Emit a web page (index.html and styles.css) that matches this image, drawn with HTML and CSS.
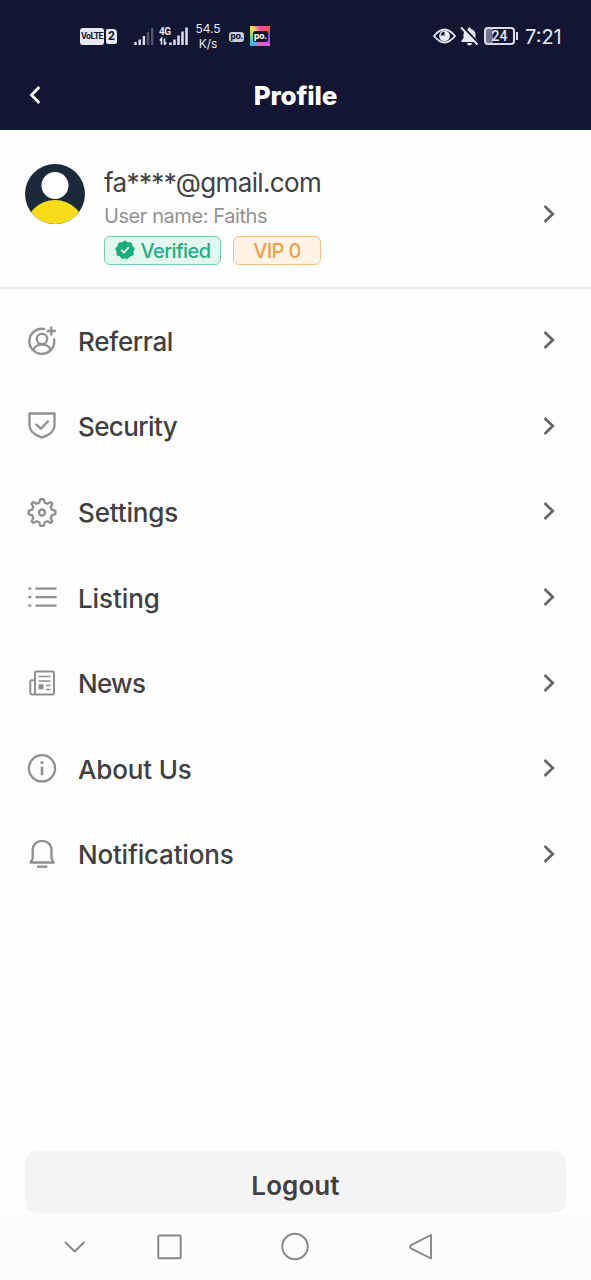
FILE: index.html
```html
<!DOCTYPE html>
<html lang="en">
<head>
<meta charset="utf-8">
<title>Profile</title>
<link rel="stylesheet" href="styles.css">
</head>
<body>
<header class="top">
  <div class="status">
    <span class="volte">VoLTE</span><span class="sim">2</span>
    <svg class="signal" width="20" height="18" viewBox="0 0 20 18"><g stroke="#dfe1ee" stroke-width="2.4"><path d="M1.5 15v3M5.700 12.500V18M9.900 9V18"/><path d="M14 5V18M18.200 1V18" opacity=".3"/></g></svg>
    <span class="network"><span class="gen">4G</span><svg width="29" height="18" viewBox="0 0 29 18"><g stroke="#dfe1ee" stroke-width="2.500"><path d="M11.500 15.500V18M15.500 12.500V18M19.500 8.500V18M23.500 4.500V18M27.500 .5V18"/><path d="M2.500 17.500V11.500L.8 13.500M5.500 11.500V17.500L7.400 15.500" fill="none" stroke-width="1.600"/></g></svg></span>
    <span class="speed">54.5<br>K/s</span>
    <span class="chip">po.</span>
    <span class="app"><span class="app-name">po.</span></span>
    <span class="status-right">
      <svg width="23" height="16" viewBox="0 0 23 16"><path d="M1 8Q11.500-5 22 8Q11.500 21 1 8Z" fill="none" stroke="#e6e8f2" stroke-width="1.800"/><circle cx="11.500" cy="8" r="5.400" fill="#e6e8f2"/><path d="M11.500 7.500V3.700A4 4 0 0 0 7.700 7.500Z" fill="#121632"/></svg>
      <svg class="mute" width="19" height="20" viewBox="0 0 19 20"><path d="M1.500 16V14.500L3.500 12V8Q4 4 8 3.200Q8 1.200 9.500 1.200T11 3.200Q15 4 15.500 8V12L17.500 14.500V16ZM7 17h5q-.3 2.500-2.500 2.500T7 17Z" fill="#e6e8f2"/><path d="M3 1L19.500 18" stroke="#121632" stroke-width="2.200"/><path d="M1 1.500L17.500 18.500" stroke="#e6e8f2" stroke-width="1.800"/></svg>
      <span class="battery">24</span><span class="battery-tip"></span>
      <span class="time">7:21</span>
    </span>
  </div>
  <div class="titlebar">
    <svg class="back" width="14" height="20" viewBox="0 0 14 20"><path d="M11.300 2L3.500 10L11.300 18" fill="none" stroke="#fff" stroke-width="2.800"/></svg>
    <h1 class="title">Profile</h1>
  </div>
</header>
<section class="account">
  <svg class="avatar" width="60" height="60" viewBox="0 0 60 60"><defs><clipPath id="disc"><circle cx="30" cy="30" r="30"/></clipPath></defs><g clip-path="url(#disc)"><path fill="#1c293a" d="M0 0h60v60H0z"/><circle cx="30" cy="66" r="30" fill="#f9dc19"/><circle cx="30" cy="21.500" r="13.500" fill="#fff"/></g></svg>
  <div class="info">
    <div class="mail">fa****@gmail.com</div>
    <div class="user">User name: Faiths</div>
    <div class="badges">
      <span class="badge verified"><svg width="20" height="20" viewBox="0 0 20 20"><path d="M10 .8L12.700 2.800L16 2.900L17 6L19.300 8.600L18 11.500L18 15L14.900 16L12.500 18.700L10 17.700L7.500 18.700L5.100 16L2 15L2 11.500L.7 8.600L3 6L4 2.900L7.300 2.800Z" fill="#17ad78" stroke="#17ad78" stroke-linejoin="round"/><path d="M6.200 9.800L9 12.500L13.900 7.200" fill="none" stroke="#fff" stroke-width="1.700"/></svg><span class="verified-text">Verified</span></span>
      <span class="badge vip">VIP 0</span>
    </div>
  </div>
  <svg class="arrow" width="14" height="20" viewBox="0 0 14 20"><path d="M2.500 2L10.800 10L2.500 18"/></svg>
</section>
<nav class="menu">
  <a class="row"><svg class="icon" viewBox="0 0 32 32"><path d="M19 4.200A12.500 12.500 0 1 0 28 13.500"/><circle cx="16" cy="14" r="5.200"/><path d="M7.500 25.300C8.500 17.800 23.500 17.800 24.500 25.300M25.300 1.500V10.500M20.800 6H29.800"/></svg><span class="label referral">Referral</span><svg class="arrow" width="14" height="20" viewBox="0 0 14 20"><path d="M2.500 2L10.800 10L2.500 18"/></svg></a>
  <a class="row"><svg class="icon" viewBox="0 0 32 32"><path d="M3.500 3.500H28.500V15.500C28.500 21.500 22 25.500 16 27.700C10 25.500 3.500 21.500 3.500 15.500Z"/><path d="M9.700 14L14.800 18.700L22.600 10.700"/></svg><span class="label security">Security</span><svg class="arrow" width="14" height="20" viewBox="0 0 14 20"><path d="M2.500 2L10.800 10L2.500 18"/></svg></a>
  <a class="row"><svg class="icon" viewBox="0 0 32 31"><path d="M14.400 2.600H17.600L18.800 6.200L21.500 7.300L24.800 5.600L26.400 7.200L24.700 10.500L25.800 13.200L29.400 14.400V17.600L25.800 18.800L24.700 21.500L26.400 24.800L24.800 26.400L21.500 24.700L18.800 25.800L17.600 29.400H14.400L13.200 25.800L10.500 24.700L7.200 26.400L5.600 24.800L7.300 21.500L6.200 18.800L2.600 17.600V14.400L6.200 13.200L7.300 10.500L5.600 7.200L7.200 5.600L10.500 7.300L13.200 6.200Z"/><circle cx="16" cy="16" r="3"/></svg><span class="label settings">Settings</span><svg class="arrow" width="14" height="20" viewBox="0 0 14 20"><path d="M2.500 2L10.800 10L2.500 18"/></svg></a>
  <a class="row"><svg class="icon" viewBox="0 0 32 32"><path d="M9.500 6.700H30.500M9.500 15.200H30.500M9.500 23.700H30.500M2.300 6.700H5.300M2.300 15.200H5.300M2.300 23.700H5.300"/></svg><span class="label listing">Listing</span><svg class="arrow" width="14" height="20" viewBox="0 0 14 20"><path d="M2.500 2L10.800 10L2.500 18"/></svg></a>
  <a class="row"><svg class="icon" viewBox="0 0 32 32"><path d="M9 27.500V6Q9 4.500 10.500 4.500H26.500Q28 4.500 28 6V25.700Q28 27.500 26.200 27.500H6.500Q4.300 27.500 4.300 25.300V14.500Q4.300 13.300 5.500 13.300H9" stroke-width="2"/><path d="M12.500 9.500H24.500M12.500 14H24.500M20 18.500H24.500M20 22.500H24.500" stroke-width="1.500"/><path d="M12.500 17.300h5v5h-5z" fill="#8b8b8b" stroke="none"/></svg><span class="label news">News</span><svg class="arrow" width="14" height="20" viewBox="0 0 14 20"><path d="M2.500 2L10.800 10L2.500 18"/></svg></a>
  <a class="row"><svg class="icon" viewBox="0 0 32 32"><circle cx="16" cy="15.300" r="13.100"/><path d="M16 13.800V22.300M16 8.300V11.100" stroke-width="2.700"/></svg><span class="label about">About Us</span><svg class="arrow" width="14" height="20" viewBox="0 0 14 20"><path d="M2.500 2L10.800 10L2.500 18"/></svg></a>
  <a class="row"><svg class="icon" viewBox="0 0 32 32"><path d="M4.500 24.500L6.700 20.500V12C6.700 6.500 11 2.800 16.100 2.800S25.500 6.500 25.500 12V20.500L27.800 24.500Z" stroke-linejoin="round"/><path d="M11 28.700H21.300"/></svg><span class="label notifications">Notifications</span><svg class="arrow" width="14" height="20" viewBox="0 0 14 20"><path d="M2.500 2L10.800 10L2.500 18"/></svg></a>
</nav>
<button class="logout">Logout</button>
<footer class="system">
  <svg width="591" height="66" viewBox="0 0 591 66" fill="none" stroke="#858585" stroke-width="1.900" stroke-linejoin="round"><path d="M65 28L74.700 37.500L84.400 28"/><rect x="158.300" y="21.500" width="22.400" height="22.800" rx="1"/><circle cx="295" cy="32.500" r="12.700"/><path d="M431 21V44.500L411 34.300Q409 32.700 411 31.200Z"/></svg>
</footer>
</body>
</html>
```
FILE: styles.css
```css
* { box-sizing: border-box; }
body {
  margin: 0;
  width: 591px;
  height: 1280px;
  display: flex;
  flex-direction: column;
  overflow: hidden;
  background: #fefefe;
  color: #404040;
  font-family: Inter, Roboto, sans-serif;
}
.top { height: 130px; background: #121632; color: #e6e8f2; }
.status { height: 72px; padding: 0 28px 0 80px; display: flex; align-items: center; }
.volte {
  width: 24px; height: 17px; border-radius: 3px; background: #e6e8f2; color: #121632;
  font: 700 9px/17px Roboto, sans-serif; letter-spacing: -.7px; text-align: center;
}
.sim {
  width: 11px; height: 15px; margin-left: 2px; border-radius: 2px 4px 2px 2px; background: #e6e8f2; color: #121632;
  font: 700 12px/15px Roboto, sans-serif; text-align: center;
}
.signal { margin-left: 17px; }
.network { margin-left: 5px; height: 18px; display: grid; }
.network > * { grid-area: 1 / 1; }
.gen { font: 700 10px/9px Roboto, sans-serif; letter-spacing: -.5px; }
.speed { width: 26px; margin-left: 7px; font-size: 12px; line-height: 15px; text-align: center; }
.chip {
  width: 15px; height: 10px; margin: 2px 0 0 8px; border-radius: 3px; background: #c8cbd8; color: #121632;
  font: 700 9px/8px "Open Sans", sans-serif; text-align: center; letter-spacing: -.5px;
}
.app {
  width: 20px; height: 20px; margin-left: 6px; display: grid; place-items: center;
  background: conic-gradient(#e548bd, #f06048, #6651ec, #d952ed, #f263a6, #32b7ec, #83db65, #f2df4d, #e548bd);
}
.app-name { width: 15px; height: 11px; border-radius: 2px; background: #15152b; color: #fff; font: 700 9px/9px "Open Sans", sans-serif; text-align: center; letter-spacing: -.4px; }
.status-right { margin-left: auto; display: flex; align-items: center; }
.mute { margin-left: 4px; }
.battery {
  width: 31px; height: 18px; margin-left: 5px; border: 2px solid #d9dbe8; border-radius: 4px;
  background: linear-gradient(90deg, #72758b 25%, transparent 25%);
  font: 500 14px/14px Roboto, sans-serif; text-align: center;
}
.battery-tip { width: 2px; height: 8px; margin-left: 1px; background: #d9dbe8; }
.time { margin: 1px 0 0 7px; width: 38px; font-size: 20px; letter-spacing: 0; white-space: nowrap; }
.titlebar { height: 48px; display: grid; grid-template-columns: 60px 1fr 60px; align-items: center; }
.back { margin: -2px 0 0 28px; }
.title { margin: 0; color: #fff; font-size: 26px; line-height: 32px; font-weight: 800; letter-spacing: -.15px; text-align: center; }
.account { height: 159px; padding: 33px 35px 0 25px; display: flex; border-bottom: 2px solid #ebebeb; }
.avatar { margin-top: 1px; flex: none; }
.info { margin-left: 19px; flex: 1; }
.mail { margin-top: 4px; font-size: 26px; line-height: 32px; letter-spacing: -.64px; }
.user { margin-top: 4px; color: #929292; font-size: 20px; line-height: 26px; letter-spacing: -.42px; }
.badges { display: flex; gap: 12px; margin-top: 7px; }
.badge { height: 29px; border: 1px solid; border-radius: 6px; display: flex; align-items: center; justify-content: center; font-size: 20px; font-weight: 450; padding-top: 1px; }
.verified { width: 117px; background: #e3f7f1; border-color: #72cdb0; color: #24ad80; gap: 6px; }
.verified svg { margin-top: -2px; }
.verified-text { letter-spacing: -.6px; }
.vip { width: 88px; background: #fff3e6; border-color: #efc384; color: #eda145; letter-spacing: -.6px; }
.arrow { flex: none; fill: none; stroke: #666; stroke-width: 2.700; }
.account .arrow { margin-top: 41px; }
.menu { padding-top: 9px; display: grid; grid-auto-rows: 85.6px; }
.row { padding: 0 35px 0 26px; display: flex; align-items: center; }
.row .arrow { margin-top: -1px; }
.icon { width: 32px; height: 32px; flex: none; fill: none; stroke: #8f8f8f; stroke-width: 2.300; stroke-linejoin: round; }
.label { flex: 1; margin-left: 20px; font-size: 26px; line-height: 32px; padding-top: 2px; font-weight: 450; }
.referral { letter-spacing: -.35px; }
.security { letter-spacing: -.6px; }
.settings { letter-spacing: -.15px; }
.listing { letter-spacing: -.1px; }
.news { letter-spacing: -.7px; }
.about { letter-spacing: -.15px; }
.notifications { letter-spacing: -.2px; }
.logout {
  height: 62px; margin: auto 25px 0; padding: 8px 0 0; border: 0; border-radius: 12px; background: #f4f4f4;
  color: #404040; font: 600 26px/32px Inter, sans-serif; letter-spacing: .1px;
}
.system { height: 66px; margin-top: 1px; background: #fcfcfc; }
```
